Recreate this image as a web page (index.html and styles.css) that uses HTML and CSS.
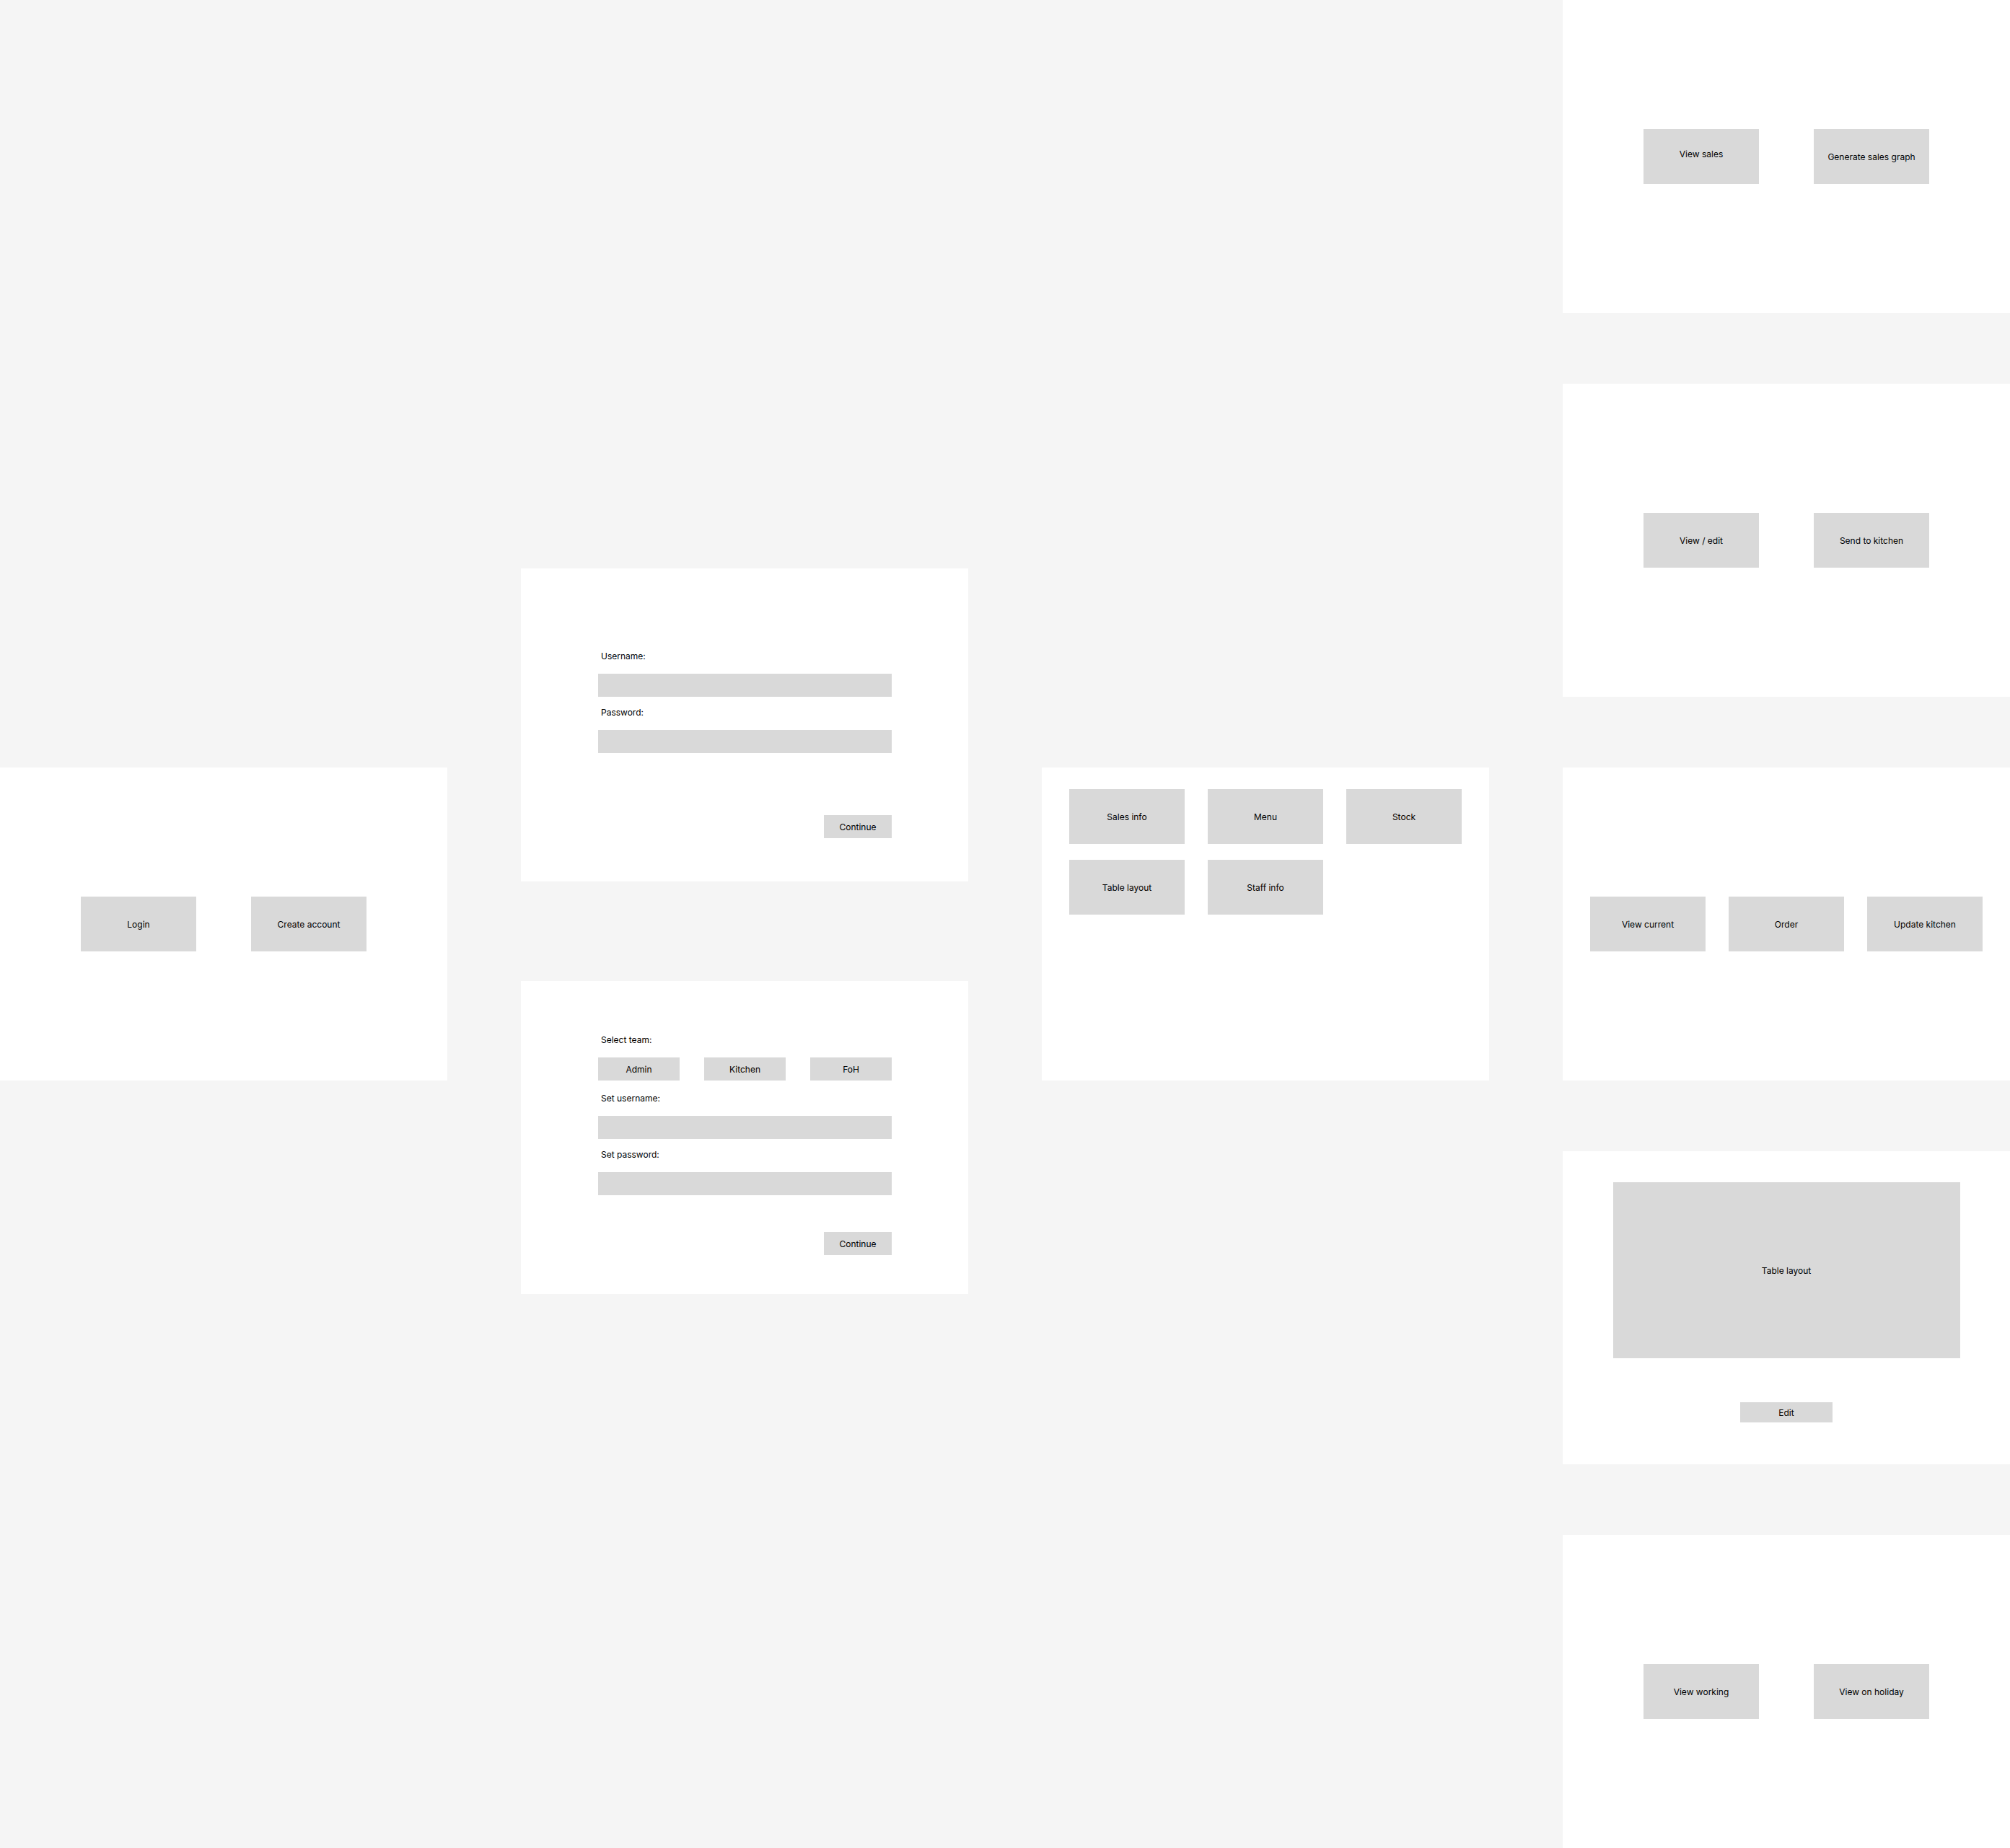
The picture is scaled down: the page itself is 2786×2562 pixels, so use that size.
FILE: index.html
```html
<!DOCTYPE html>
<html lang="en">
<head>
    <meta charset="UTF-8">
    <meta name="viewport" content="width=device-width, initial-scale=1.0">
    <title>Restaurant app - wireframes</title>
    <link rel="stylesheet" href="styles.css">
</head>
<body>
    <main class="canvas">
        <!-- Start screen -->
        <section class="column column-center">
            <div class="frame frame-pair">
                <button class="btn btn-lg">Login</button>
                <button class="btn btn-lg">Create account</button>
            </div>
        </section>

        <!-- Login / create account forms -->
        <section class="column column-forms">
            <div class="frame form-frame login-frame">
                <form class="form">
                    <label class="field-label" for="username">Username:</label>
                    <input class="field-input" type="text" id="username">
                    <label class="field-label" for="password">Password:</label>
                    <input class="field-input" type="password" id="password">
                    <button type="button" class="btn btn-continue">Continue</button>
                </form>
            </div>

            <div class="frame form-frame signup-frame">
                <form class="form">
                    <span class="field-label">Select team:</span>
                    <div class="team-row">
                        <button type="button" class="btn btn-team">Admin</button>
                        <button type="button" class="btn btn-team">Kitchen</button>
                        <button type="button" class="btn btn-team">FoH</button>
                    </div>
                    <label class="field-label" for="new-username">Set username:</label>
                    <input class="field-input" type="text" id="new-username">
                    <label class="field-label" for="new-password">Set password:</label>
                    <input class="field-input" type="password" id="new-password">
                    <button type="button" class="btn btn-continue">Continue</button>
                </form>
            </div>
        </section>

        <!-- Main menu -->
        <section class="column column-center">
            <div class="frame frame-menu">
                <button class="btn btn-lg">Sales info</button>
                <button class="btn btn-lg">Menu</button>
                <button class="btn btn-lg">Stock</button>
                <button class="btn btn-lg">Table layout</button>
                <button class="btn btn-lg">Staff info</button>
            </div>
        </section>

        <!-- Sub screens -->
        <section class="column column-stack">
            <div class="frame frame-pair">
                <button class="btn btn-lg nudge-up">View sales</button>
                <button class="btn btn-lg">Generate sales graph</button>
            </div>
            <div class="frame frame-pair">
                <button class="btn btn-lg">View / edit</button>
                <button class="btn btn-lg">Send to kitchen</button>
            </div>
            <div class="frame frame-row3">
                <button class="btn btn-lg">View current</button>
                <button class="btn btn-lg">Order</button>
                <button class="btn btn-lg">Update kitchen</button>
            </div>
            <div class="frame frame-layout">
                <div class="layout-preview">Table layout</div>
                <button class="btn btn-edit">Edit</button>
            </div>
            <div class="frame frame-pair">
                <button class="btn btn-lg">View working</button>
                <button class="btn btn-lg">View on holiday</button>
            </div>
        </section>
    </main>
</body>
</html>
```

FILE: styles.css
```css
body {
    margin: 0;
    background-color: #f5f5f5;
    font-family: Inter, 'Liberation Sans', sans-serif;
    font-size: 12px;
    color: #000;
    overflow: hidden;
}
.canvas {
    display: flex;
    gap: 102px;
    width: 2786px;
    height: 2562px;
}
.column {
    display: flex;
    flex-direction: column;
    width: 620px;
    flex-shrink: 0;
}
.column-center {
    justify-content: center;
}
.column-forms {
    padding-top: 788px;
    gap: 138px;
}
.column-stack {
    gap: 98px;
}
.frame {
    width: 620px;
    height: 434px;
    background-color: #fff;
    box-sizing: border-box;
    flex-shrink: 0;
}

/* buttons */
.btn {
    display: flex;
    align-items: center;
    justify-content: center;
    padding: 0;
    border: none;
    border-radius: 0;
    background-color: #d9d9d9;
    color: #000;
    font: inherit;
    cursor: pointer;
    box-sizing: border-box;
}
.btn-lg {
    width: 160px;
    height: 76px;
}
.nudge-up {
    padding-bottom: 8px;
}
.btn-team {
    width: 113px;
    height: 32px;
}
.btn-continue {
    width: 94px;
    height: 32px;
    align-self: flex-end;
}
.btn-edit {
    width: 128px;
    height: 28px;
    margin: 61px auto 0;
}

/* frame layouts */
.frame-pair {
    display: flex;
    align-items: center;
    gap: 76px;
    padding-left: 112px;
}
.frame-row3 {
    display: flex;
    align-items: center;
    gap: 32px;
    padding-left: 38px;
}
.frame-menu {
    display: grid;
    grid-template-columns: repeat(3, 160px);
    column-gap: 32px;
    row-gap: 22px;
    align-content: start;
    padding: 30px 38px;
}
.frame-layout {
    display: flex;
    flex-direction: column;
    padding-top: 43px;
}
.layout-preview {
    display: flex;
    align-items: center;
    justify-content: center;
    width: 481px;
    height: 244px;
    margin: 0 auto;
    background-color: #d9d9d9;
}

/* forms */
.form-frame {
    padding-left: 107px;
}
.login-frame {
    padding-top: 114px;
}
.signup-frame {
    padding-top: 74px;
}
.form {
    display: flex;
    flex-direction: column;
    width: 407px;
    margin: 0;
}
.field-label {
    display: block;
    height: 16px;
    line-height: 16px;
    padding-left: 4px;
    margin-bottom: 16px;
}
.field-input {
    display: block;
    width: 407px;
    height: 32px;
    padding: 0 8px;
    border: none;
    border-radius: 0;
    background-color: #d9d9d9;
    box-sizing: border-box;
    font: inherit;
}
.field-input + .field-label {
    margin-top: 14px;
}
.team-row {
    display: flex;
    justify-content: space-between;
}
.team-row + .field-label {
    margin-top: 17px;
}
.login-frame .btn-continue {
    margin-top: 86px;
}
.signup-frame .btn-continue {
    margin-top: 51px;
}
```
